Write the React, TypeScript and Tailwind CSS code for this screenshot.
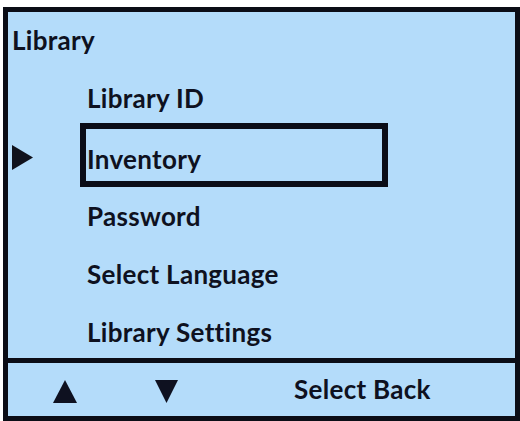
import React from "react";

const font = { fontFamily: "Lato, 'Open Sans', sans-serif" };

function Row({
  label,
  selected,
  h,
  pt,
}: {
  label: string;
  selected?: boolean;
  h: string;
  pt: string;
}) {
  return (
    <div className={`flex ${h}`}>
      <div className="w-[72px] shrink-0 flex items-center pl-[4px]">
        {selected && (
          <svg width="21" height="25" viewBox="0 0 21 25" className="mt-[4px]">
            <path d="M0 0 L21 12.5 L0 25 Z" fill="#10121c" />
          </svg>
        )}
      </div>
      <div
        className={`w-[308px] ${
          selected ? "border-[6px] border-[#0b0d17] h-[64px]" : "border-l-[6px] border-transparent"
        } ${pt} leading-[30px] pl-[1px]`}
      >
        {label}
      </div>
    </div>
  );
}

export default function App() {
  return (
    <div
      className="w-[520px] h-[421px] bg-white pt-[7px] pl-[3px] text-[26px] font-bold tracking-[0.3px] text-[#0e1120]"
      style={font}
    >
      <div className="w-[517px] h-[414px] border-[5px] border-[#0b0d16] bg-[#b4dcfa] flex flex-col">
        <div className="h-[346px] overflow-hidden">
          <div className="pt-[13px] h-[43px] leading-[30px] pl-[4px]">Library</div>
          <Row label="Library ID" h="h-[68px]" pt="pt-[28px]" />
          <Row label="Inventory" selected h="h-[64px]" pt="pt-[15px]" />
          <Row label="Password" h="h-[58px]" pt="pt-[14px]" />
          <Row label="Select Language" h="h-[58px]" pt="pt-[14px]" />
          <Row label="Library Settings" h="h-[58px]" pt="pt-[14px]" />
        </div>
        <div className="border-t-[5px] border-[#0b0d16] h-[58px] flex items-start">
          <svg width="24" height="23" viewBox="0 0 24 23" className="ml-[45px] mt-[17px]">
            <path d="M12 0 L24 23 L0 23 Z" fill="#0e1120" />
          </svg>
          <svg width="23" height="23" viewBox="0 0 23 23" className="ml-[78px] mt-[17px]">
            <path d="M0 0 L23 0 L11.5 23 Z" fill="#0e1120" />
          </svg>
          <div className="ml-[116px] leading-[53px]">Select Back</div>
        </div>
      </div>
    </div>
  );
}
